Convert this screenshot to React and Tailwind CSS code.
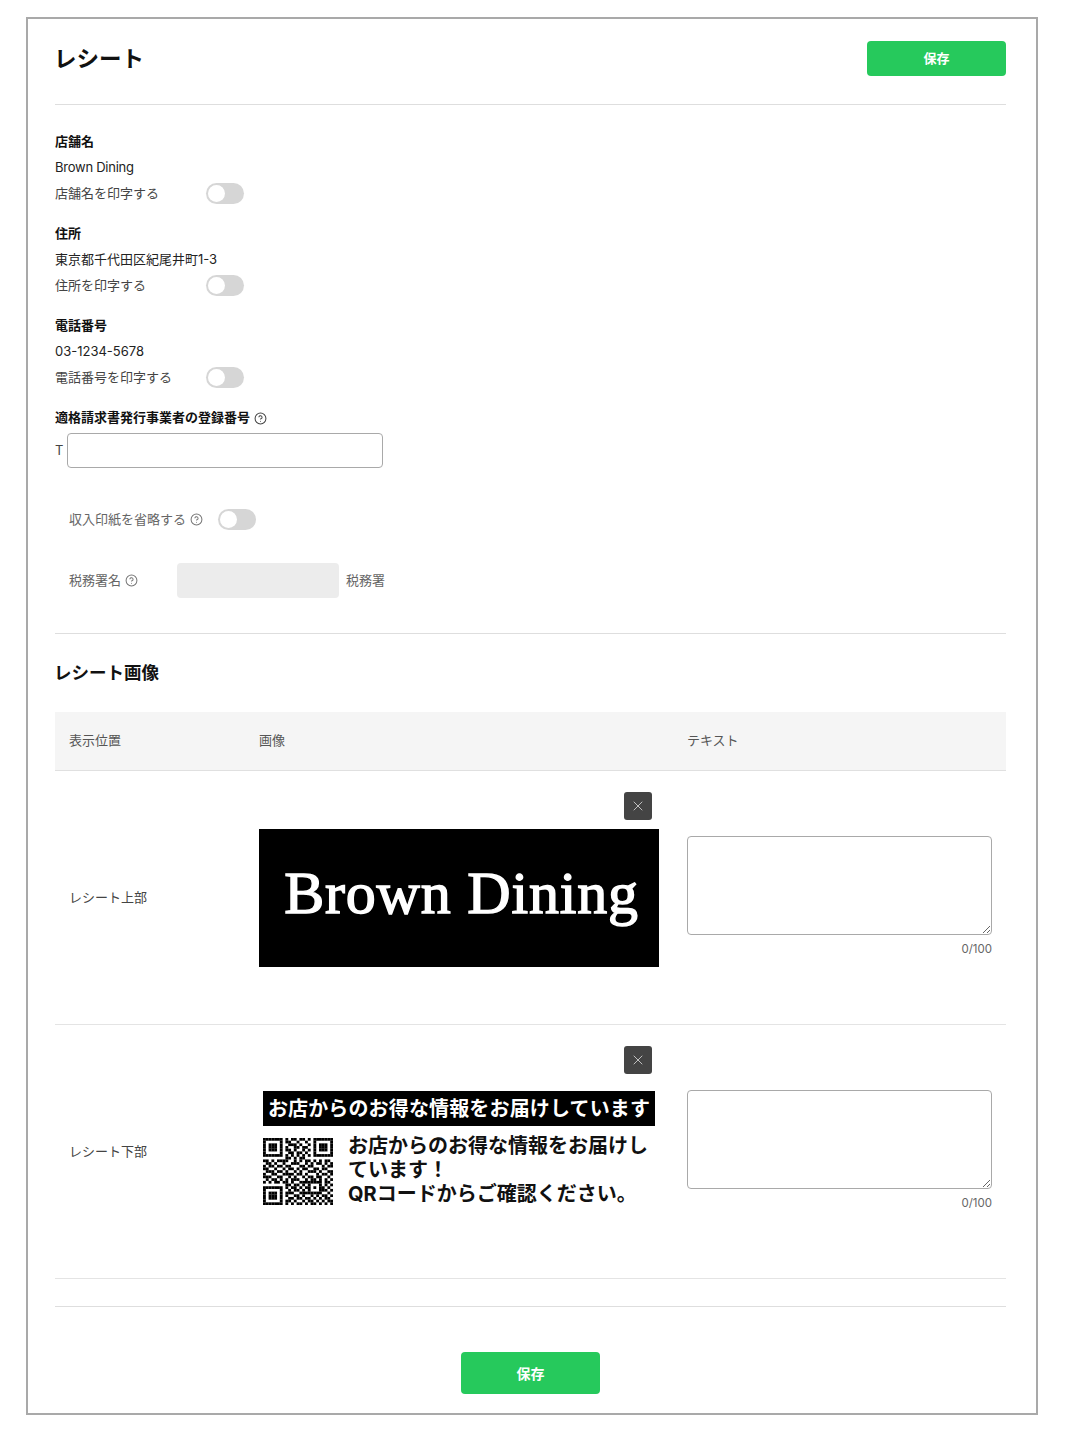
import React from "react";
import { CircleHelp, X } from "lucide-react";

const Toggle = () => (
    <button type="button" className="flex items-center w-[38px] h-[21px] p-[2px] rounded-full bg-[#d6d6d6]">
        <span className="block w-[17px] h-[17px] rounded-full bg-white" />
    </button>
);

const Help = ({ className }) => <CircleHelp size={13} strokeWidth={1.9} className={className} />;

const PrintField = ({ label, value, toggleLabel, valueClass }) => (
    <div className="flex flex-col h-[92px]">
        <div className="h-[26px] flex items-center text-[13px] font-bold text-[#111]">{label}</div>
        <div className={`h-[26px] flex items-center text-[13px] text-[#222] ${valueClass}`}>{value}</div>
        <div className="h-[25px] flex items-center text-[13px] text-[#444]">
            <span className="w-[151px]">{toggleLabel}</span>
            <Toggle />
        </div>
    </div>
);

const SaveButton = ({ className }) => (
    <button type="button" className={`bg-[#26c95c] text-white font-bold rounded-[4px] w-[139px] ${className}`}>
        保存
    </button>
);

const qrRows = [
    "1111111010110110101111111",
    "1000001011001001001000001",
    "1011101001110100101011101",
    "1011101010011011001011101",
    "1011101011010010101011101",
    "1000001001101101001000001",
    "1111111010101010101111111",
    "0000000011010110000000000",
    "1101011110010101101010110",
    "0110100100111001010110101",
    "1011011011000110110001011",
    "1100100101101011001101100",
    "0111011010010100111010011",
    "1001100111101101000101101",
    "1110011001010010110110010",
    "0101101010111001011010101",
    "1010110110100111111110110",
    "0000000011011010100010101",
    "1111111010110101101011010",
    "1000001001011010100011101",
    "1011101011100111111110010",
    "1011101010011010010101101",
    "1011101001101101101010110",
    "1000001011010010110101011",
    "1111111010101101011010101",
];

const QrCode = () => (
    <svg width="70" height="67" viewBox="0 0 25 25" preserveAspectRatio="none" className="shrink-0">
        {qrRows.map((row, y) =>
            row.split("").map((cell, x) =>
                cell === "1" ? <rect key={`${x}-${y}`} x={x} y={y} width="1.02" height="1.02" fill="#000" /> : null
            )
        )}
    </svg>
);

const TopImage = () => (
    <div className="w-[400px] h-[138px] bg-black flex items-center justify-center pl-[5px]">
        <span className="font-['Liberation_Serif',serif] text-white text-[60px] leading-none tracking-[0.8px] pb-[10px] [-webkit-text-stroke:1.4px_white]">
            Brown Dining
        </span>
    </div>
);

const BottomImage = () => (
    <div className="w-[400px] h-[138px] bg-white flex flex-col px-[4px] pt-[8px]">
        <div className="h-[35px] bg-black text-white text-[20px] font-bold flex items-center justify-center whitespace-nowrap tracking-[0.15px]">
            お店からのお得な情報をお届けしています
        </div>
        <div className="flex mt-[12px]">
            <QrCode />
            <div className="ml-[15px] text-[20px] font-bold leading-[24px] text-[#111] whitespace-nowrap -mt-[4px]">
                <div>お店からのお得な情報をお届けし</div>
                <div>ています！</div>
                <div>QRコードからご確認ください。</div>
            </div>
        </div>
    </div>
);

const ImageRow = ({ label, children }) => (
    <div className="flex h-[254px] border-b border-[#e4e4e4]">
        <div className="w-[204px] pl-[14px] pt-[117px] text-[13px] leading-[18px] text-[#444]">{label}</div>
        <div className="w-[428px] pt-[21px]">
            <div className="w-[393px] flex justify-end">
                <button type="button" className="w-[28px] h-[28px] rounded-[3px] bg-[#444] flex items-center justify-center text-white">
                    <X size={16} strokeWidth={1} />
                </button>
            </div>
            <div className="mt-[9px]">{children}</div>
        </div>
        <div className="w-[305px] pt-[65px]">
            <textarea className="block w-[305px] h-[99px] border border-[#a9a9a9] rounded-[4px] outline-none" />
            <div className="text-right text-[11.5px] leading-[16px] mt-[6px] text-[#666]">0/100</div>
        </div>
    </div>
);

const App = () => {
    return (
        <div className="font-['Inter','Noto_Sans_CJK_JP',sans-serif] bg-white pl-[26px] pt-[17px] h-[1432px]">
            <div className="w-[1012px] h-[1398px] border-2 border-[#a9a9a9] pl-[27px] pr-[30px]">
                <div className="flex justify-between items-start h-[86px] border-b border-[#dedede]">
                    <h1 className="text-[22.5px] leading-[30px] font-bold text-[#111] mt-[25px] -ml-px">レシート</h1>
                    <SaveButton className="h-[35px] mt-[22px] text-[13px]" />
                </div>

                <div className="pt-[24px]">
                    <PrintField label="店舗名" value="Brown Dining" toggleLabel="店舗名を印字する" valueClass="tracking-[-0.25px]" />
                    <PrintField label="住所" value="東京都千代田区紀尾井町1-3" toggleLabel="住所を印字する" />
                    <PrintField label="電話番号" value="03-1234-5678" toggleLabel="電話番号を印字する" />
                </div>

                <div className="h-[26px] flex items-center gap-[4px] text-[13px] font-bold text-[#111]">
                    適格請求書発行事業者の登録番号
                    <Help className="text-[#444]" />
                </div>
                <div className="flex items-center mt-[2px] text-[13px] text-[#444]">
                    <span className="w-[12px]">T</span>
                    <input type="text" className="w-[316px] h-[35px] border border-[#a9a9a9] rounded-[4px] outline-none" />
                </div>

                <div className="flex items-center h-[21px] mt-[41px] pl-[14px] text-[13px] text-[#666]">
                    <span>収入印紙を省略する</span>
                    <Help className="ml-[4px] text-[#777]" />
                    <span className="ml-[15px]"><Toggle /></span>
                </div>

                <div className="flex items-center h-[35px] mt-[33px] pl-[14px] text-[13px] text-[#666]">
                    <span>税務署名</span>
                    <Help className="ml-[4px] text-[#777]" />
                    <div className="w-[162px] h-[35px] ml-[39px] mr-[7px] rounded-[4px] bg-[#ececec]" />
                    <span>税務署</span>
                </div>

                <div className="border-b border-[#dedede] h-[36px]" />

                <h2 className="text-[17.5px] leading-[26px] font-bold text-[#111] mt-[26px] -ml-px">レシート画像</h2>

                <div className="mt-[26px]">
                    <div className="flex items-center h-[59px] bg-[#f5f5f5] border-b border-[#e0e0e0] text-[13px] text-[#555]">
                        <div className="w-[204px] pl-[14px]">表示位置</div>
                        <div className="w-[428px]">画像</div>
                        <div>テキスト</div>
                    </div>
                    <ImageRow label="レシート上部"><TopImage /></ImageRow>
                    <ImageRow label="レシート下部"><BottomImage /></ImageRow>
                </div>

                <div className="h-[28px] border-b border-[#dedede]" />

                <div className="flex justify-center mt-[45px]">
                    <SaveButton className="h-[42px] text-[14px]" />
                </div>
            </div>
        </div>
    );
};

export default App;
